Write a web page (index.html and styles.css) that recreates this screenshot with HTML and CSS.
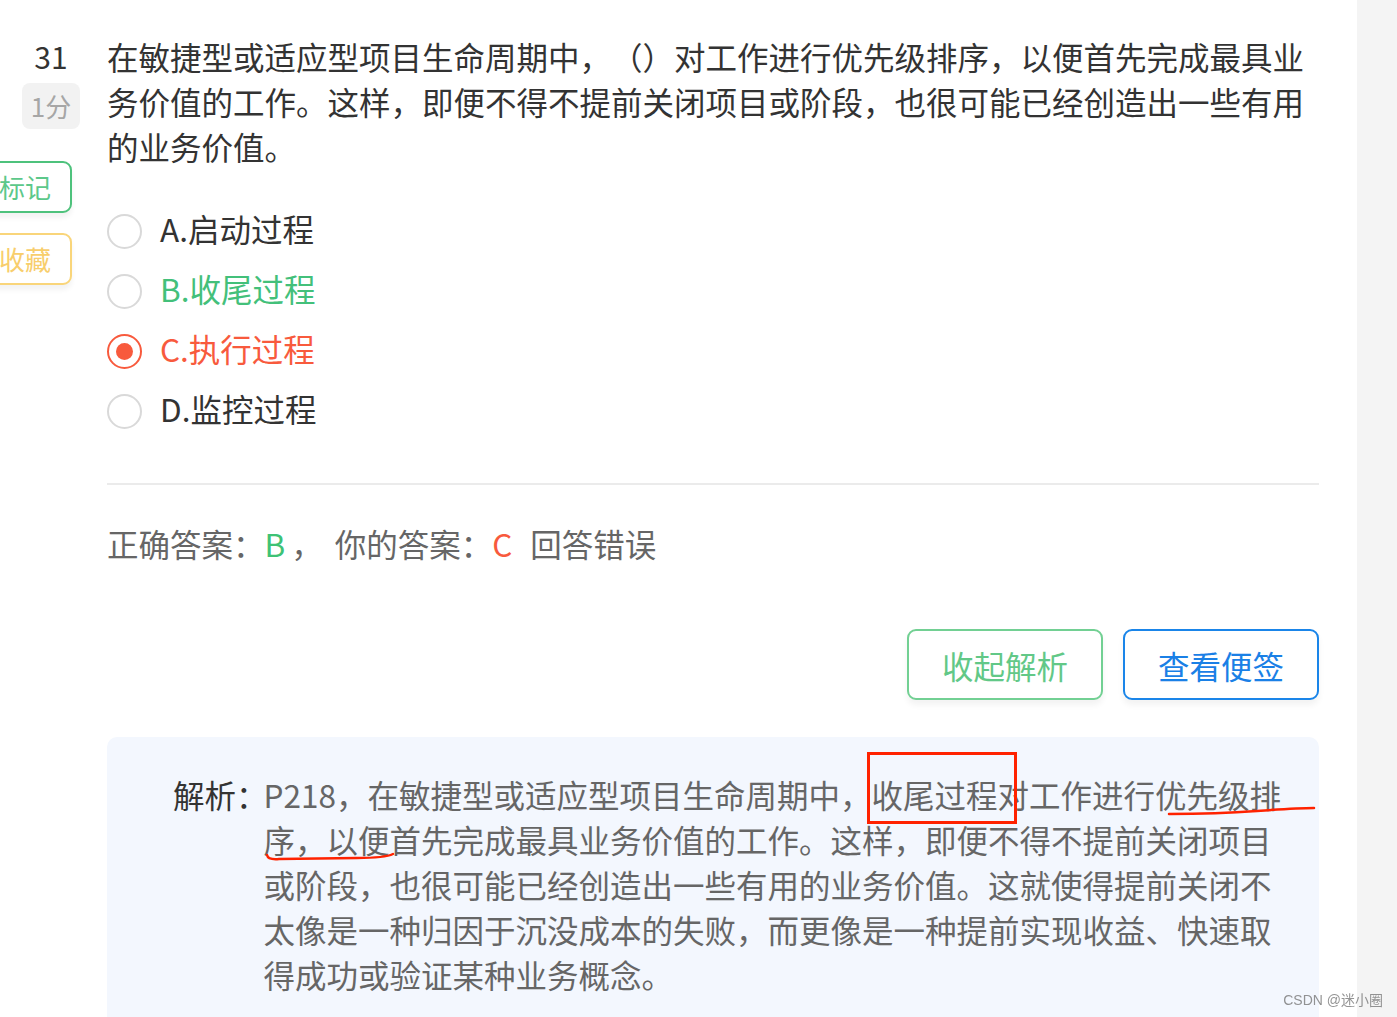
FILE: index.html
```html
<!DOCTYPE html>
<html lang="zh-CN">
<head>
<meta charset="utf-8">
<title>题目解析</title>
<link rel="stylesheet" href="styles.css">
</head>
<body>
<div class="page">
  <main class="main">
    <section class="question">
      <aside class="side">
        <div class="num">31</div>
        <div class="score">1分</div>
        <button class="tag mark">标记</button>
        <button class="tag fav">收藏</button>
      </aside>
      <div class="content">
        <p class="stem">在敏捷型或适应型项目生命周期中，（）对工作进行优先级排序，以便首先完成最具业务价值的工作。这样，即便不得不提前关闭项目或阶段，也很可能已经创造出一些有用的业务价值。</p>
        <ul class="options">
          <li class="opt"><span class="radio"></span><span class="opt-text">A.启动过程</span></li>
          <li class="opt correct"><span class="radio"></span><span class="opt-text">B.收尾过程</span></li>
          <li class="opt chosen"><span class="radio"></span><span class="opt-text">C.执行过程</span></li>
          <li class="opt"><span class="radio"></span><span class="opt-text">D.监控过程</span></li>
        </ul>
        <div class="divider"></div>
        <div class="result">
          <span>正确答案：</span><span class="ans-ok">B</span><span class="sep">，</span><span>你的答案：</span><span class="ans-bad">C</span><span>回答错误</span>
        </div>
        <div class="actions">
          <button class="btn btn-green">收起解析</button>
          <button class="btn btn-blue">查看便签</button>
        </div>
        <div class="analysis">
          <span class="an-label">解析：</span>
          <div class="an-text">P218，在敏捷型或适应型项目生命周期中，收尾过程对工作进行优先级排序，以便首先完成最具业务价值的工作。这样，即便不得不提前关闭项目或阶段，也很可能已经创造出一些有用的业务价值。这就使得提前关闭不太像是一种归因于沉没成本的失败，而更像是一种提前实现收益、快速取得成功或验证某种业务概念。</div>
          <svg class="marks" width="1213" height="300" viewBox="0 0 1213 300" aria-hidden="true">
            <rect x="761.5" y="16.5" width="147" height="69" fill="none" stroke="#ff2200" stroke-width="3"/>
            <path d="M1062 77 Q1110 77 1150 74 T1207 71" fill="none" stroke="#ff2200" stroke-width="2.5" stroke-linecap="round"/>
            <path d="M160 118 Q161 123 172 122 L250 121 Q278 121 286 117" fill="none" stroke="#ff2200" stroke-width="2.5" stroke-linecap="round"/>
          </svg>
        </div>
      </div>
    </section>
  </main>
  <div class="rail"></div>
</div>
<div class="watermark">CSDN @迷小圈</div>
</body>
</html>
```

FILE: styles.css
```css
* { box-sizing: border-box; }
html, body {
  margin: 0;
  padding: 0;
  height: 100%;
  overflow: hidden;
  background: #ffffff;
  font-family: "Noto Sans CJK SC", "Noto Sans", sans-serif;
  text-spacing-trim: space-all;
}
.page {
  display: flex;
  height: 100vh;
}
.main {
  flex: 1;
  background: #ffffff;
  overflow: hidden;
}
.rail {
  width: 40px;
  background: #f4f4f4;
}
.question {
  display: flex;
  padding-top: 34px;
}
.side {
  width: 58px;
  margin-left: 22px;
  display: flex;
  flex-direction: column;
  align-items: center;
  flex-shrink: 0;
}
.num {
  font-size: 30px;
  line-height: 45px;
  color: #333;
}
.score {
  margin-top: 4px;
  width: 58px;
  height: 46px;
  border-radius: 8px;
  background: #f2f2f2;
  color: #a6a6a6;
  font-size: 26px;
  line-height: 46px;
  text-align: center;
}
.tag {
  display: block;
  width: 88px;
  height: 52px;
  margin-left: -46px;
  border-radius: 9px;
  border: 2px solid;
  background: #fff;
  font-family: inherit;
  font-size: 26px;
  line-height: 46px;
  padding: 0 6px 0 0;
  text-align: center;
  box-shadow: 0 5px 5px rgba(0, 0, 0, 0.05);
}
.mark {
  margin-top: 32px;
  border-color: #4ec27c;
  color: #5cc88a;
}
.fav {
  margin-top: 20px;
  border-color: #f9d57a;
  color: #f8ce6c;
}
.content {
  width: 1212px;
  margin-left: 27px;
  flex-shrink: 0;
}
.stem {
  margin: 0;
  font-size: 31.5px;
  line-height: 45px;
  color: #333;
}
.options {
  list-style: none;
  margin: 32px 0 0;
  padding: 0;
}
.opt {
  display: flex;
  align-items: center;
  height: 60px;
  font-size: 31.5px;
  color: #333;
}
.radio {
  width: 35px;
  height: 35px;
  border-radius: 50%;
  border: 2px solid #d9d9d9;
  flex-shrink: 0;
  display: flex;
  align-items: center;
  justify-content: center;
}
.opt-text {
  margin-left: 18px;
  padding-bottom: 6px;
}
.opt.correct { color: #43c07a; }
.opt.chosen { color: #f85a3d; }
.opt.chosen .radio { border-color: #f85a3d; }
.opt.chosen .radio::after {
  content: "";
  width: 17px;
  height: 17px;
  border-radius: 50%;
  background: #f85a3d;
}
.divider {
  margin-top: 42px;
  height: 2px;
  background: #ebebeb;
}
.result {
  margin-top: 36px;
  font-size: 31.5px;
  line-height: 45px;
  color: #666;
}
.ans-ok { color: #3ec275; margin-right: 6px; }
.sep { margin-right: 12px; }
.ans-bad { color: #f85a3d; margin: 0 18px 0 0; }
.actions {
  margin-top: 63px;
  display: flex;
  justify-content: flex-end;
  gap: 20px;
}
.btn {
  width: 196px;
  height: 71px;
  border-radius: 9px;
  border: 2px solid;
  background: #fff;
  font-family: inherit;
  font-size: 31.5px;
  padding: 0;
  box-shadow: 0 5px 6px rgba(0, 0, 0, 0.05);
}
.btn-green { border-color: #72d093; color: #62c887; }
.btn-blue { border-color: #1a85e9; color: #1a80e6; }
.analysis {
  position: relative;
  margin-top: 37px;
  display: flex;
  background: #f3f7fe;
  border-radius: 10px;
  padding: 35px 25px 60px 66px;
  font-size: 31.5px;
  line-height: 45px;
}
.an-label {
  color: #333;
  flex-shrink: 0;
  margin-right: -4px;
}
.an-text {
  color: #666;
  width: 1030px;
}
.marks {
  position: absolute;
  left: 0;
  top: 0;
  pointer-events: none;
}
.watermark {
  position: fixed;
  right: 14px;
  bottom: 8px;
  font-size: 14px;
  color: rgba(120, 120, 120, 0.8);
  font-family: "Liberation Sans", "Noto Sans CJK SC", sans-serif;
}
```
